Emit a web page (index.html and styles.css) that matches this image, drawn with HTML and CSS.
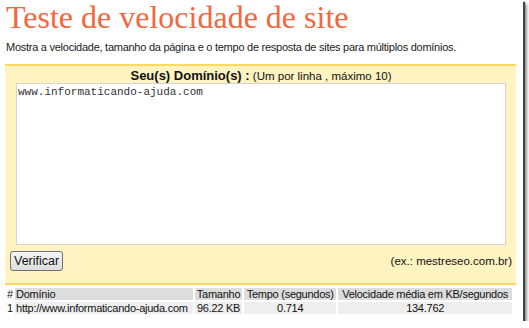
FILE: index.html
```html
<!DOCTYPE html>
<html lang="pt">
<head>
    <meta charset="UTF-8">
    <title>Teste de velocidade de site</title>
    <link rel="stylesheet" href="styles.css">
</head>
<body>
<div class="frame">
    <h1>Teste de velocidade de site</h1>
    <p class="intro">Mostra a velocidade, tamanho da página e o tempo de resposta de sites para múltiplos domínios.</p>

    <form class="box">
        <div class="label"><b>Seu(s) Domínio(s) :</b> (Um por linha , máximo 10)</div>
        <textarea>www.informaticando-ajuda.com</textarea>
        <div class="actions">
            <button type="button">Verificar</button>
            <span>(ex.: mestreseo.com.br)</span>
        </div>
    </form>

    <table class="results">
        <tr class="head">
            <td class="num">#</td>
            <td class="dom">Domínio</td>
            <td>Tamanho</td>
            <td>Tempo (segundos)</td>
            <td>Velocidade média em KB/segundos</td>
        </tr>
        <tr class="row">
            <td class="num">1</td>
            <td class="dom">http://www.informaticando-ajuda.com</td>
            <td>96.22 KB</td>
            <td>0.714</td>
            <td>134.762</td>
        </tr>
    </table>
</div>
</body>
</html>
```

FILE: styles.css
```css
body {
    margin: 0;
    background: #ffffff;
    font-family: "Liberation Sans", Arial, sans-serif;
}

.frame {
    width: 523px;
    height: 321px;
    box-sizing: border-box;
    padding: 0 7px 0 5px;
    background: #ffffff;
    box-shadow: 2px 2px 1px #444444, 4px 4px 3px #999999;
    overflow: hidden;
}

h1 {
    margin: 0;
    padding: 0 0 0 1px;
    font-family: "Liberation Serif", Georgia, serif;
    font-weight: normal;
    font-size: 32px;
    line-height: 35px;
    color: #f4663c;
}

.intro {
    margin: 6px 0 0 1px;
    font-size: 11px;
    letter-spacing: -0.26px;
    line-height: 13px;
    color: #222222;
    white-space: nowrap;
}

.box {
    margin-top: 10px;
    height: 221px;
    box-sizing: border-box;
    border-top: 2px solid #fbd865;
    border-bottom: 2px solid #fbd865;
    background: #fff3c2;
    padding: 3px 4px 0 5px;
}

.label {
    text-align: center;
    font-size: 11.5px;
    line-height: 14px;
    color: #111111;
}

.label b {
    font-size: 13px;
}

textarea {
    display: block;
    width: 490px;
    height: 162px;
    margin: 0 0 0 6px;
    box-sizing: border-box;
    border: 1px solid #d4d4d4;
    padding: 2px 1px;
    resize: none;
    font-family: "Liberation Mono", "Courier New", monospace;
    font-size: 11px;
    color: #333333;
}

.actions {
    display: flex;
    justify-content: space-between;
    align-items: center;
    margin-top: 6px;
    font-size: 11.5px;
    color: #111111;
}

button {
    font-family: "Liberation Sans", Arial, sans-serif;
    font-size: 12.5px;
    padding: 2px 3px;
    color: #111111;
    background: linear-gradient(#f6f6f6, #dddddd);
    border: 1px solid #707070;
    border-radius: 3px;
}

.results {
    width: 509px;
    margin-top: 1px;
    border-collapse: separate;
    border-spacing: 2px;
    font-size: 11px;
    letter-spacing: -0.25px;
    color: #111111;
    white-space: nowrap;
}

.results td {
    padding: 0 1px;
    line-height: 12px;
    text-align: center;
}

.results .num,
.results .dom {
    text-align: left;
}

.head td {
    background: #dddddd;
}

.row td {
    background: #eeeeee;
}

.results td.num {
    background: transparent;
    padding: 0;
}

.results td.dom {
    width: 176px;
}
```
